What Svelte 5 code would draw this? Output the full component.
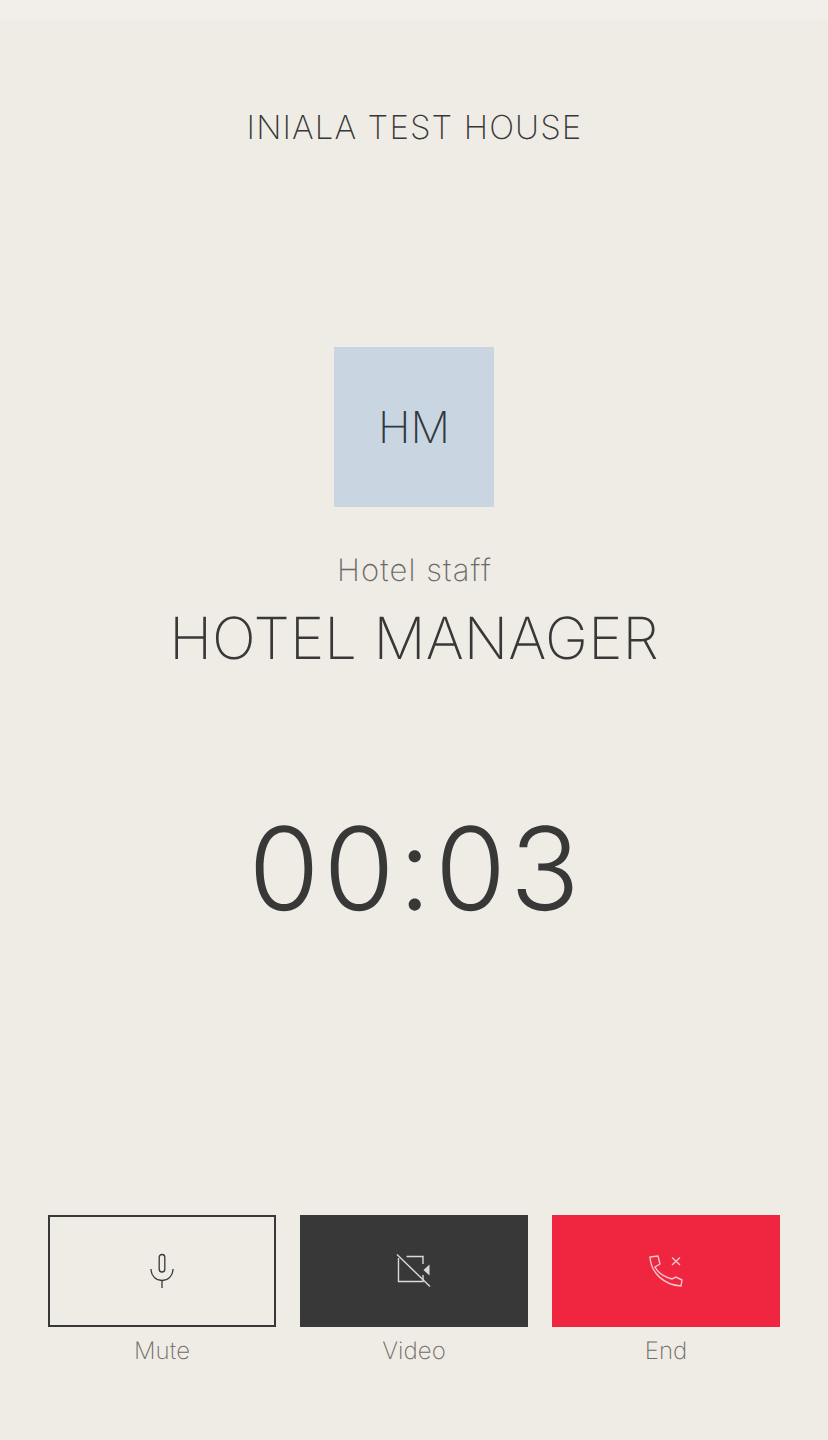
<script>
  let actions = [
    { label: 'Mute', kind: 'mute' },
    { label: 'Video', kind: 'video' },
    { label: 'End', kind: 'end' }
  ];
</script>

<div class="screen">
  <div class="status-bar"></div>
  <h2 class="house">INIALA TEST HOUSE</h2>

  <div class="avatar">HM</div>
  <p class="role">Hotel staff</p>
  <h1 class="name">HOTEL MANAGER</h1>
  <div class="timer">00:03</div>

  <div class="actions">
    {#each actions as a}
      <div class="action">
        <button class="btn {a.kind}" aria-label={a.label}>
          {#if a.kind === 'mute'}
            <svg width="36" height="40" viewBox="0 0 36 40" fill="none" stroke="#383838" stroke-width="1.3">
              <rect x="15.200" y="3.500" width="5.600" height="17.500" rx="2.800" />
              <path d="M7 18c0 7 5 11.500 11 11.500S29 25 29 18" />
              <path d="M18 29.500V37" />
            </svg>
          {:else if a.kind === 'video'}
            <svg width="36" height="36" viewBox="0 0 36 36" fill="none" stroke="#dcdad6" stroke-width="1.4">
              <path d="M10.500 3.500H27V11M27 22v6.500H2.500V5" />
              <path d="M1 1.500l33 32" />
              <path d="M33.500 11.500v11l-6-5.500z" fill="#dcdad6" stroke="none" />
            </svg>
          {:else}
            <svg width="36" height="36" viewBox="0 0 36 36" fill="none" stroke="#f5c6cd" stroke-width="1.4">
              <path d="M2 4l8-1 2 8-5 3c3 6 10 10 17 12l4-2 6 3-1 6C16 32 3 20 2 4z" />
              <path d="M24 4.500l8 7.500M32 4.500l-8 7.500" />
            </svg>
          {/if}
        </button>
        <span class="label">{a.label}</span>
      </div>
    {/each}
  </div>
</div>

<style>
  :global(body) {
    margin: 0;
    background: #efece6;
  }

  .screen {
    height: 1440px;
    display: flex;
    flex-direction: column;
    align-items: center;
    background: #efece6;
    color: #383838;
    font-family: Inter, "Liberation Sans", sans-serif;
    font-weight: 200;
    text-rendering: geometricPrecision;
  }

  .status-bar {
    align-self: stretch;
    height: 20px;
    background: #f2efeb;
  }

  .house {
    margin: 88px 0 0;
    padding-left: 1px;
    font-size: 33px;
    line-height: 38px;
    font-weight: 220;
    letter-spacing: 1.1px;
  }

  .avatar {
    width: 160px;
    height: 160px;
    margin-top: 201px;
    display: flex;
    align-items: center;
    justify-content: center;
    background: #cad5e2;
    font-size: 44px;
    color: #2f3940;
  }

  .role {
    margin: 45px 0 0;
    padding-left: 1px;
    font-size: 31px;
    line-height: 38px;
    letter-spacing: 1.1px;
    color: #6b6a67;
  }

  .name {
    margin: 16px 0 0;
    font-size: 58px;
    line-height: 64px;
    font-weight: 240;
    letter-spacing: 0.1px;
  }

  .timer {
    margin-top: 131px;
    padding-left: 4px;
    font-size: 115px;
    line-height: 136px;
    font-weight: 280;
    letter-spacing: 4px;
  }

  .actions {
    align-self: stretch;
    margin-top: 278px;
    padding: 0 48px;
    display: grid;
    grid-template-columns: repeat(3, 1fr);
    gap: 24px;
  }

  .action {
    display: flex;
    flex-direction: column;
    align-items: center;
  }

  .btn {
    width: 100%;
    height: 112px;
    padding: 0;
    display: flex;
    align-items: center;
    justify-content: center;
    border: 2px solid #383838;
    background: none;
  }

  .btn.video {
    background: #383838;
  }

  .btn.end {
    background: #f0253f;
    border-color: #f0253f;
  }

  .label {
    margin-top: 10px;
    font-size: 24px;
    line-height: 28px;
    letter-spacing: 0.1px;
    font-weight: 230;
    color: #6f6d68;
  }
</style>
